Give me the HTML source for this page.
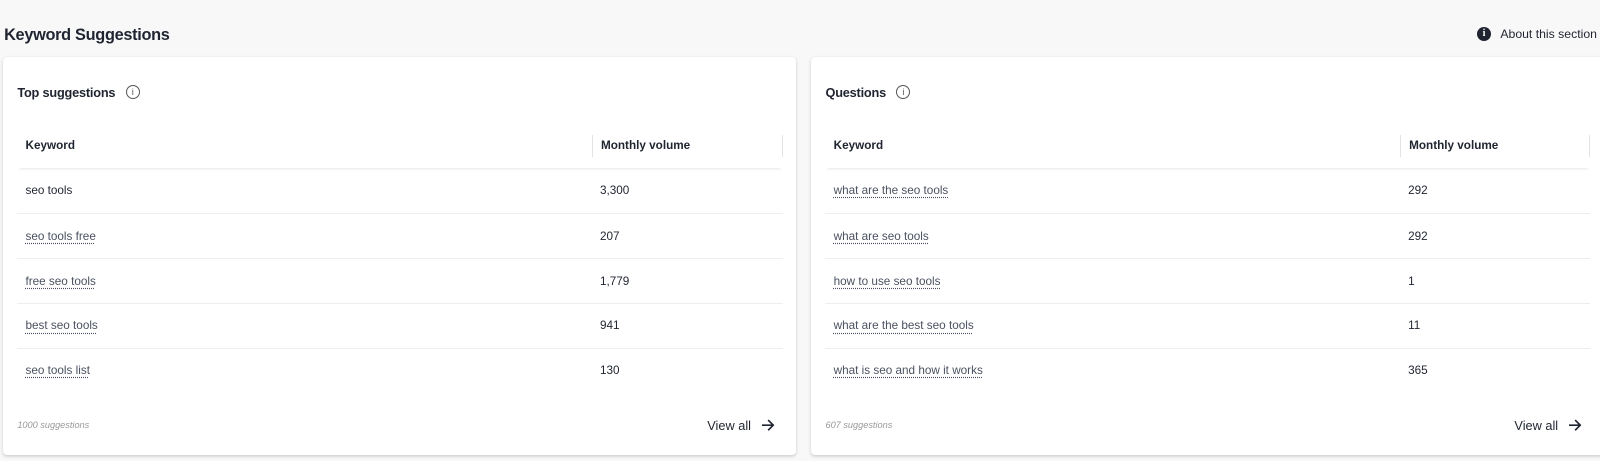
<!DOCTYPE html>
<html><head><style>
*{box-sizing:border-box;margin:0;padding:0}
body{width:1600px;height:461px;background:#f8f8f8;font-family:"Liberation Sans",sans-serif;color:#1f2430;overflow:hidden}
#w{zoom:1.0204;position:relative;width:1568px;height:452px}
.h{position:absolute;left:4px;top:25px;font-size:16px;font-weight:bold;letter-spacing:-0.3px}
.about{position:absolute;right:3px;top:26px;font-size:12px;display:flex;align-items:center}
.about i{display:inline-block;width:14px;height:14px;border-radius:50%;background:#1f2430;color:#fff;font-style:normal;font-size:10px;font-weight:bold;text-align:center;line-height:14px;margin-right:9px;font-family:"Liberation Serif",serif}
.card{position:absolute;top:56px;height:390px;background:#fff;border-radius:4px;box-shadow:0 1px 3px rgba(0,0,0,.18)}
.ct{position:absolute;left:14px;top:27px;font-size:12.5px;font-weight:bold;display:flex;align-items:center;letter-spacing:-0.2px}
.ct span{display:inline-block;width:14px;height:14px;border:1.3px solid #555;border-radius:50%;margin-left:10px;font-size:9px;text-align:center;line-height:12px;font-weight:normal;color:#555}
.tbl{position:absolute;left:14px;right:13px;top:65px}
.hr{height:44px;display:flex;align-items:center;font-size:11.5px;font-weight:bold;box-shadow:0 3px 3px -2px rgba(0,0,0,.12);position:relative}
.row{height:44px;display:flex;align-items:center;font-size:11.5px;border-top:1px solid #eee}
.c1{padding-left:8px;width:var(--w)}
.c2{padding-left:8px;flex:1}
.hr .c2{border-left:1px solid #e4e4e4;height:22px;line-height:22px}
.hr::after{content:"";position:absolute;right:0;top:11px;height:22px;border-left:1px solid #e4e4e4}
a{color:#4a5160;text-decoration:underline;text-decoration-style:dotted;text-underline-offset:3px}
.foot{position:absolute;left:14px;right:20px;bottom:22px;display:flex;justify-content:space-between;align-items:center}
.foot em{font-size:9px;color:#999}
.foot b{font-weight:normal;font-size:12.5px;display:flex;align-items:center}
</style></head><body><div id="w">
<div class="h">Keyword Suggestions</div>
<div class="about"><i>i</i>About this section</div>

<div class="card" style="left:3px;width:777px">
<div class="ct">Top suggestions<span>i</span></div>
<div class="tbl" style="--w:563px">
<div class="hr"><div class="c1">Keyword</div><div class="c2">Monthly volume</div></div>
<div class="row" style="border:none"><div class="c1">seo tools</div><div class="c2">3,300</div></div>
<div class="row"><div class="c1"><a>seo tools free</a></div><div class="c2">207</div></div>
<div class="row"><div class="c1"><a>free seo tools</a></div><div class="c2">1,779</div></div>
<div class="row"><div class="c1"><a>best seo tools</a></div><div class="c2">941</div></div>
<div class="row"><div class="c1"><a>seo tools list</a></div><div class="c2">130</div></div>
</div>
<div class="foot"><em>1000 suggestions</em><b>View all <svg width="14" height="14" viewBox="0 0 14 14" style="margin-left:10px"><path d="M1 7h11M7 2l5 5-5 5" fill="none" stroke="#1f2430" stroke-width="1.6"/></svg></b></div>
</div>

<div class="card" style="left:795px;width:776px">
<div class="ct">Questions<span>i</span></div>
<div class="tbl" style="--w:563px">
<div class="hr"><div class="c1">Keyword</div><div class="c2">Monthly volume</div></div>
<div class="row" style="border:none"><div class="c1"><a>what are the seo tools</a></div><div class="c2">292</div></div>
<div class="row"><div class="c1"><a>what are seo tools</a></div><div class="c2">292</div></div>
<div class="row"><div class="c1"><a>how to use seo tools</a></div><div class="c2">1</div></div>
<div class="row"><div class="c1"><a>what are the best seo tools</a></div><div class="c2">11</div></div>
<div class="row"><div class="c1"><a>what is seo and how it works</a></div><div class="c2">365</div></div>
</div>
<div class="foot"><em>607 suggestions</em><b>View all <svg width="14" height="14" viewBox="0 0 14 14" style="margin-left:10px"><path d="M1 7h11M7 2l5 5-5 5" fill="none" stroke="#1f2430" stroke-width="1.6"/></svg></b></div>
</div>
</div></body></html>
